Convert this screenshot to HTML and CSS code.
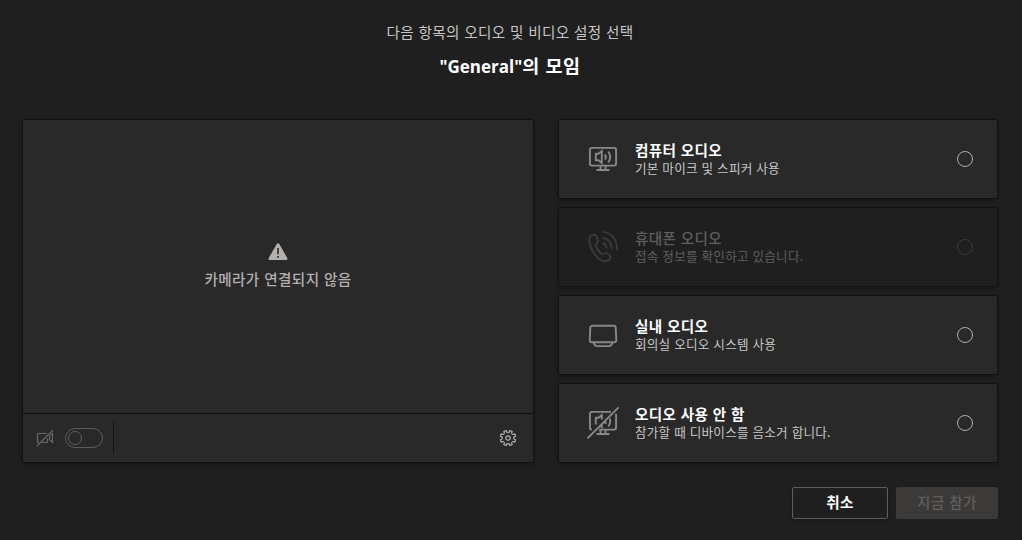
FILE: index.html
```html
<!DOCTYPE html>
<html lang="ko">
<head>
    <meta charset="UTF-8">
    <meta name="viewport" content="width=device-width, initial-scale=1.0">
    <title>"General"의 모임</title>
    <link rel="stylesheet" href="styles.css">
</head>
<body>
    <header class="header">
        <p class="subtitle">다음 항목의 오디오 및 비디오 설정 선택</p>
        <h1 class="title"><span class="latin">"General"</span>의 모임</h1>
    </header>

    <main class="content">
        <section class="preview">
            <div class="camera">
                <svg class="warning" width="20" height="18" viewBox="0 0 20 18">
                    <path fill="currentColor" fill-rule="evenodd" d="M8.6 1.2a1.6 1.6 0 0 1 2.8 0l7.9 13.9a1.4 1.4 0 0 1-1.2 2H1.9a1.4 1.4 0 0 1-1.2-2zM9.2 5v6.2h1.6V5zm0 8v1.8h1.6V13z"/>
                </svg>
                <p class="camera-text">카메라가 연결되지 않음</p>
            </div>
            <div class="toolbar">
                <svg class="camera-off" width="18" height="18" viewBox="0 0 18 18" fill="none" stroke="currentColor" stroke-width="1.2">
                    <path d="M11.5 9.5v3a1 1 0 0 1-1 1H6M3 13.5h-.5a1 1 0 0 1-1-1v-7a1 1 0 0 1 1-1h8M16.5 4.5v9l-3-2.700V7.200zM1 17 17 1"/>
                </svg>
                <button class="toggle" aria-label="카메라"><span class="knob"></span></button>
                <span class="divider"></span>
                <svg class="gear" width="18" height="18" viewBox="0 0 18 18" fill="none" stroke="currentColor" stroke-width="1.200">
                    <path stroke-linejoin="round" d="M7.2 1.500 7.700 3.100Q9 3.700 10.300 3.100L10.800 1.500 13.100 2.400 12.600 4.100Q13 5.200 14.100 5.500L15.700 4.900 16.600 7.200 15 8Q14.500 9 15 10L16.600 10.800 15.700 13.100 14.100 12.500Q13 12.800 12.600 13.900L13.100 15.600 10.800 16.500 10.300 14.900Q9 14.300 7.700 14.900L7.200 16.500 4.900 15.600 5.400 13.900Q5 12.800 3.900 12.500L2.300 13.100 1.400 10.800 3 10Q3.500 9 3 8L1.400 7.200 2.300 4.900 3.900 5.500Q5 5.200 5.400 4.100L4.900 2.400z"/>
                    <circle cx="9" cy="9" r="2.200"/>
                </svg>
            </div>
        </section>

        <section class="options">
            <div class="option">
                <svg class="icon" viewBox="0 0 32 32">
                    <rect x="2.900" y="4.900" width="26.200" height="17.700" rx="2"/>
                    <path d="M9.500 27h13M13.500 23v4M18.500 23v4M8.800 10.800h2.700l3.300-2.800v12l-3.300-2.800H8.800zM18 11.500q1.800 2.500 0 5M21.300 8.500q3.800 5.500 0 11"/>
                </svg>
                <div class="text">
                    <p class="name">컴퓨터 오디오</p>
                    <p class="desc">기본 마이크 및 스피커 사용</p>
                </div>
                <span class="radio"></span>
            </div>
            <div class="option disabled">
                <svg class="icon" viewBox="0 0 32 32">
                    <path d="M4 4.700 6 3.900c2-.7 3.300.3 3.900 2l1 3c.5 1.600 0 2.600-1.100 3.500-1.100.9-1.200 1.600-.8 2.700 1.100 3 2.700 5.300 4.800 7.200 1 .9 1.800 1 3 .5l1.300-.5c1.600-.6 2.700-.2 3.600 1l1.200 1.600c1 1.400.8 2.700-.5 3.700-2.500 1.900-5.300 2.200-8.200.6C8 25.500 3.800 18.500 2.500 10.700 2.100 8 2.200 5.800 4 4.700z"/>
                    <path d="M16.500.9c8 .8 14.300 8.600 13.400 18.500M15.500 6.800c5.300.6 9.500 5.500 9.300 11.500M15.300 12.300c2.500.4 4.200 2.500 4 5"/>
                </svg>
                <div class="text">
                    <p class="name">휴대폰 오디오</p>
                    <p class="desc">접속 정보를 확인하고 있습니다.</p>
                </div>
                <span class="radio"></span>
            </div>
            <div class="option">
                <svg class="icon" viewBox="0 0 32 32">
                    <path d="M5.300 6.800h21.400a2 2 0 0 1 2 2l.6 12.400a2 2 0 0 1-2 2.100H4.700a2 2 0 0 1-2-2.100l.6-12.400a2 2 0 0 1 2-2zM6.500 23.500l.7 1.600a3 3 0 0 0 2.800 2h12a3 3 0 0 0 2.800-2l.7-1.600"/>
                </svg>
                <div class="text">
                    <p class="name">실내 오디오</p>
                    <p class="desc">회의실 오디오 시스템 사용</p>
                </div>
                <span class="radio"></span>
            </div>
            <div class="option">
                <svg class="icon" viewBox="0 0 32 32">
                    <path d="M24 4.900H4.900a2 2 0 0 0-2 2v13.700a2 2 0 0 0 2 2M12 22.600h15.100a2 2 0 0 0 2-2V6.800M9.500 27h13M13.500 23v4M18.500 23v4M8.800 17.500v-6.700h2.700l3.300-2.800v4.500M14.800 17v3l-1.500-1.200M18.500 14v3M22.800 11.500q1.200 4-1.500 8M.500 31.300 31.500.500"/>
                </svg>
                <div class="text">
                    <p class="name">오디오 사용 안 함</p>
                    <p class="desc">참가할 때 디바이스를 음소거 합니다.</p>
                </div>
                <span class="radio"></span>
            </div>
        </section>
    </main>

    <footer class="actions">
        <button class="btn cancel">취소</button>
        <button class="btn join" disabled>지금 참가</button>
    </footer>
</body>
</html>
```
FILE: styles.css
```css
* {
    box-sizing: border-box;
}
body {
    margin: 0;
    height: 540px;
    background: #1f1f1f;
    color: #fff;
    font-family: "Noto Sans CJK KR", sans-serif;
    overflow: hidden;
}
p, h1 {
    margin: 0;
    white-space: nowrap;
}
.header {
    height: 119px;
    padding: 22px 2px 0 0;
    text-align: center;
}
.subtitle {
    font-size: 14.6px;
    line-height: 20px;
    letter-spacing: 0.35px;
    color: #c8c6c4;
}
.title {
    margin-top: 11px;
    font-size: 18.5px;
    line-height: 24px;
    font-weight: bold;
    letter-spacing: 0.5px;
}
.latin {
    font-family: "Open Sans", sans-serif;
    font-size: 17px;
    letter-spacing: 0;
}
.content {
    display: flex;
    gap: 24px;
    padding: 0 24px 0 22px;
}
.preview {
    display: flex;
    flex-direction: column;
    width: 512px;
    height: 344px;
    background: #292929;
    border: 1px solid #111;
    border-radius: 2px;
    box-shadow: 0 2px 5px rgba(0, 0, 0, 0.25);
}
.camera {
    flex: 1;
    display: flex;
    flex-direction: column;
    align-items: center;
    padding-top: 123px;
    color: #b3b0ad;
}
.warning {
    display: block;
}
.camera-text {
    margin-top: 8px;
    font-size: 14.6px;
    line-height: 20px;
    font-weight: 500;
    letter-spacing: 0.4px;
}
.toolbar {
    display: flex;
    align-items: center;
    height: 49px;
    padding: 0 16px 0 13px;
    border-top: 1px solid #111;
}
.camera-off {
    color: #6a6866;
}
.toggle {
    display: flex;
    align-items: center;
    width: 38px;
    height: 20px;
    margin-left: 11px;
    padding: 0 2px;
    background: none;
    border: 1px solid #605e5c;
    border-radius: 10px;
}
.knob {
    width: 14px;
    height: 14px;
    border: 1px solid #605e5c;
    border-radius: 50%;
}
.divider {
    width: 1px;
    height: 32px;
    margin-left: 10px;
    background: #171717;
}
.gear {
    margin-left: auto;
    color: #b3b0ad;
}
.options {
    display: flex;
    flex-direction: column;
    gap: 8px;
    width: 440px;
}
.option {
    display: flex;
    align-items: center;
    height: 80px;
    padding: 0 24px 0 28px;
    background: #292929;
    border: 1px solid #111;
    border-radius: 2px;
    box-shadow: 0 2px 5px rgba(0, 0, 0, 0.25);
}
.icon {
    width: 32px;
    height: 32px;
    fill: none;
    stroke: #8a8886;
    stroke-width: 1.9;
}
.text {
    flex: 1;
    margin: 0 0 1px 16px;
}
.name {
    font-size: 14.6px;
    line-height: 18px;
    font-weight: bold;
    letter-spacing: 0.35px;
}
.desc {
    font-size: 12.6px;
    line-height: 18px;
    letter-spacing: 0.22px;
    color: #c8c6c4;
}
.radio {
    width: 16px;
    height: 16px;
    border: 1px solid #b3b0ad;
    border-radius: 50%;
}
.disabled {
    background: #1f1f1f;
}
.disabled .icon {
    stroke: #3b3a39;
}
.disabled .name,
.disabled .desc {
    color: #605e5c;
}
.disabled .name {
    font-weight: 500;
}
.disabled .radio {
    border-color: #3b3a39;
}
.actions {
    display: flex;
    justify-content: flex-end;
    gap: 8px;
    padding: 24px 24px 0 0;
}
.btn {
    height: 32px;
    padding: 0 0 2px;
    border-radius: 2px;
    font-family: inherit;
    font-size: 14.6px;
    line-height: 20px;
    letter-spacing: 0.4px;
}
.cancel {
    width: 96px;
    background: #1f1f1f;
    border: 1px solid #605e5c;
    color: #fff;
    font-weight: bold;
    box-shadow: 0 2px 3px rgba(0, 0, 0, 0.25);
}
.join {
    width: 102px;
    background: #3b3a39;
    border: none;
    color: #605e5c;
    font-weight: 500;
}
```
